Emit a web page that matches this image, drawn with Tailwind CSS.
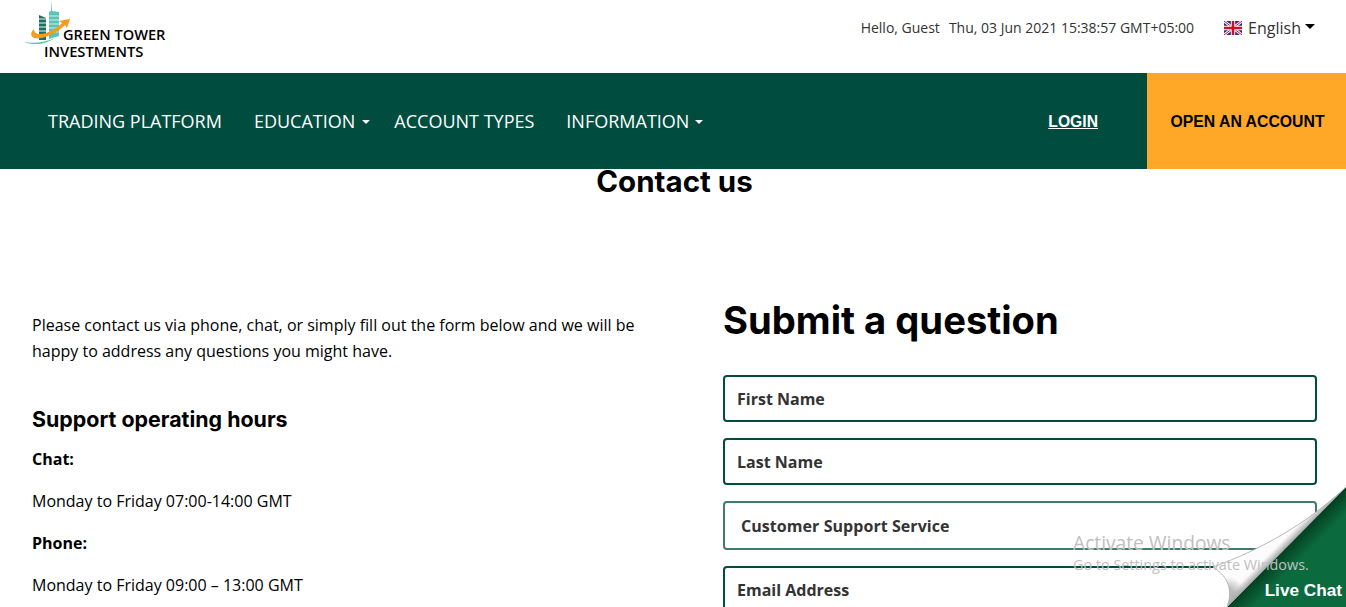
<!DOCTYPE html>
<html lang="en">
<head>
    <meta charset="UTF-8">
    <meta name="viewport" content="width=device-width, initial-scale=1.0">
    <title>Contact us - Green Tower Investments</title>
    <script src="https://cdn.jsdelivr.net/npm/@tailwindcss/browser@4"></script>
</head>
<body class="relative h-[607px] overflow-hidden bg-white font-['Open_Sans',sans-serif] text-black">

    <!-- Top bar -->
    <header class="flex h-[73px] items-start justify-between">
        <a href="#" class="relative ml-[24px] block h-[60px] w-[150px]">
            <svg width="62" height="46" viewBox="0 0 62 46" class="absolute left-0 top-0">
                <path d="M15 15l7 3v22h-7z" fill="#1f6f5f"/>
                <path d="M15 19h7M15 23h7M15 27h7M15 31h7M15 35h7" stroke="#fff" stroke-width="0.9"/>
                <path d="M25 12l2-1 .5-11 .5 11 7 1v24l-10 3z" fill="#5cc4b4"/>
                <path d="M25 16h10M25 20h10M25 24h10M25 28h10M25 32h10" stroke="#fff" stroke-width="0.7"/>
                <path d="M0 42c10 2 22 0 31-4-8 6-21 8-31 4z" fill="#5cc4b4"/>
                <path d="M10 29C4 35 8 40 18 38C27 36 36 30 41 25L43 28L46 19L35 21L38 23C32 29 23 34 16 34C12 34 10 32 10 29Z" fill="#f39c1f"/>
            </svg>
            <span class="absolute left-[39px] top-[26px] whitespace-nowrap text-[14.6px] leading-[16px] font-semibold">GREEN TOWER</span>
            <span class="absolute left-[20px] top-[43px] whitespace-nowrap text-[14.7px] leading-[16px] font-semibold">INVESTMENTS</span>
        </a>
        <div class="flex items-center pt-[16px] pr-[31px] text-[#333]">
            <span class="text-[14px] leading-[24px]">Hello, Guest</span>
            <span class="ml-[9px] text-[14px] leading-[24px]">Thu, 03 Jun 2021 15:38:57 GMT+05:00</span>
            <svg width="18" height="14" viewBox="0 0 18 14" class="ml-[30px]">
                <rect width="18" height="14" fill="#2b2f7d"/>
                <path d="M0 0l18 14M18 0L0 14" stroke="#fff" stroke-width="2.6"/>
                <path d="M0 0l18 14M18 0L0 14" stroke="#c8102e" stroke-width="1"/>
                <path d="M9 0v14M0 7h18" stroke="#fff" stroke-width="4.4"/>
                <path d="M9 0v14M0 7h18" stroke="#c8102e" stroke-width="2.6"/>
            </svg>
            <span class="ml-[6px] text-[16px] leading-[24px]">English</span>
            <span class="ml-[4px] mb-[3px] h-0 w-0 border-x-[5px] border-t-[5px] border-x-transparent border-t-black"></span>
        </div>
    </header>

    <!-- Main nav -->
    <nav class="flex h-[96px] items-center bg-[#004d40] pl-[48px] text-[18px] text-white">
        <a href="#" class="mr-[32px]">TRADING PLATFORM</a>
        <a href="#" class="flex items-center">EDUCATION<span class="ml-[7px] mt-[2px] h-0 w-0 border-x-[4px] border-t-[4px] border-x-transparent border-t-white"></span></a>
        <a href="#" class="ml-[24px] mr-[32px]">ACCOUNT TYPES</a>
        <a href="#" class="flex items-center">INFORMATION<span class="ml-[6px] mt-[2px] h-0 w-0 border-x-[4px] border-t-[4px] border-x-transparent border-t-white"></span></a>
        <a href="#" class="ml-auto mr-[49px] mt-[2px] font-['Liberation_Sans',sans-serif] text-[15.7px] font-bold underline">LOGIN</a>
        <a href="#" class="flex h-full w-[199px] items-center justify-center bg-[#ffa827] pt-[2px] pl-[2px] font-['Liberation_Sans',sans-serif] text-[15.8px] font-bold text-black">OPEN AN ACCOUNT</a>
    </nav>

    <h1 class="-mt-[1px] pl-[3px] text-center font-['Inter',sans-serif] text-[29.5px] leading-[26px] font-bold">Contact us</h1>

    <!-- Content -->
    <main class="mt-[101px] grid grid-cols-[691px_594px] pl-[32px]">
        <section class="pt-[17px]">
            <p class="w-[620px] text-[16px] leading-[26px]">Please contact us via phone, chat, or simply fill out the form below and we will be happy to address any questions you might have.</p>
            <h3 class="mt-[40px] font-['Inter',sans-serif] text-[21.4px] leading-[30px] font-bold">Support operating hours</h3>
            <p class="mt-[12px] text-[16px] leading-[26px] font-bold">Chat:</p>
            <p class="mt-[16px] text-[16px] leading-[26px]">Monday to Friday 07:00-14:00 GMT</p>
            <p class="mt-[16px] text-[16px] leading-[26px] font-bold">Phone:</p>
            <p class="mt-[16px] text-[16px] leading-[26px]">Monday to Friday 09:00 – 13:00 GMT</p>
        </section>
        <section>
            <h2 class="font-['Inter',sans-serif] text-[38.2px] leading-[50px] font-bold">Submit a question</h2>
            <form class="mt-[30px] flex flex-col">
                <input type="text" placeholder="First Name" class="h-[47px] rounded-[4px] border-2 border-[#004d40] px-[12px] text-[16px] font-bold placeholder:text-[#333] placeholder:opacity-100">
                <input type="text" placeholder="Last Name" class="mt-[16px] h-[47px] rounded-[4px] border-2 border-[#004d40] px-[12px] text-[16px] font-bold placeholder:text-[#333] placeholder:opacity-100">
                <div class="mt-[16px] flex h-[49px] items-center rounded-[4px] border-2 border-[#437a6f] pl-[16px] text-[16px] tracking-[0.06px] font-bold text-[#333]">Customer Support Service</div>
                <input type="text" placeholder="Email Address" class="mt-[16px] h-[47px] rounded-[4px] border-2 border-[#004d40] px-[12px] text-[16px] font-bold placeholder:text-[#333] placeholder:opacity-100">
            </form>
        </section>
    </main>

    <!-- Live chat page curl -->
    <a href="#" class="absolute bottom-0 right-0 block h-[127px] w-[146px]">
        <svg width="146" height="127" viewBox="0 0 146 127" class="absolute inset-0">
            <defs>
                <linearGradient id="curl" x1="13" y1="87" x2="40" y2="114" gradientUnits="userSpaceOnUse">
                    <stop offset="0" stop-color="#ffffff"/>
                    <stop offset="0.8" stop-color="#fbfbfb"/>
                    <stop offset="1" stop-color="#a8a8a8"/>
                </linearGradient>
                <linearGradient id="shade" x1="27" y1="127" x2="40" y2="140" gradientUnits="userSpaceOnUse">
                    <stop offset="0" stop-color="#04401f"/>
                    <stop offset="1" stop-color="#0b6b3f"/>
                </linearGradient>
                <radialGradient id="fold" cx="29" cy="112" r="15" gradientUnits="userSpaceOnUse">
                    <stop offset="0.2" stop-color="#a0a0a0" stop-opacity="0.7"/>
                    <stop offset="1" stop-color="#a0a0a0" stop-opacity="0"/>
                </radialGradient>
            </defs>
            <path d="M146 7L146 127L27 127Z" fill="url(#shade)"/>
            <path d="M146 7L27 127C33 111 29 97 13 87C60 70 105 45 146 7Z" fill="url(#curl)" stroke="#a8a8a8" stroke-width="0.8"/>
            <path d="M146 7L27 127C33 111 29 97 13 87C60 70 105 45 146 7Z" fill="url(#fold)"/>
        </svg>
        <span class="absolute bottom-[6px] right-[4px] font-['Liberation_Sans',sans-serif] text-[17.2px] leading-[22px] font-bold text-white">Live Chat</span>
    </a>

    <!-- Activation watermark -->
    <div class="pointer-events-none absolute left-[1073px] top-[530px] font-['Open_Sans',sans-serif] text-[#c0c0c0]">
        <div class="text-[19.2px] leading-[26px]">Activate Windows</div>
        <div class="text-[14.4px] leading-[18px]">Go to Settings to activate Windows.</div>
    </div>
</body>
</html>
